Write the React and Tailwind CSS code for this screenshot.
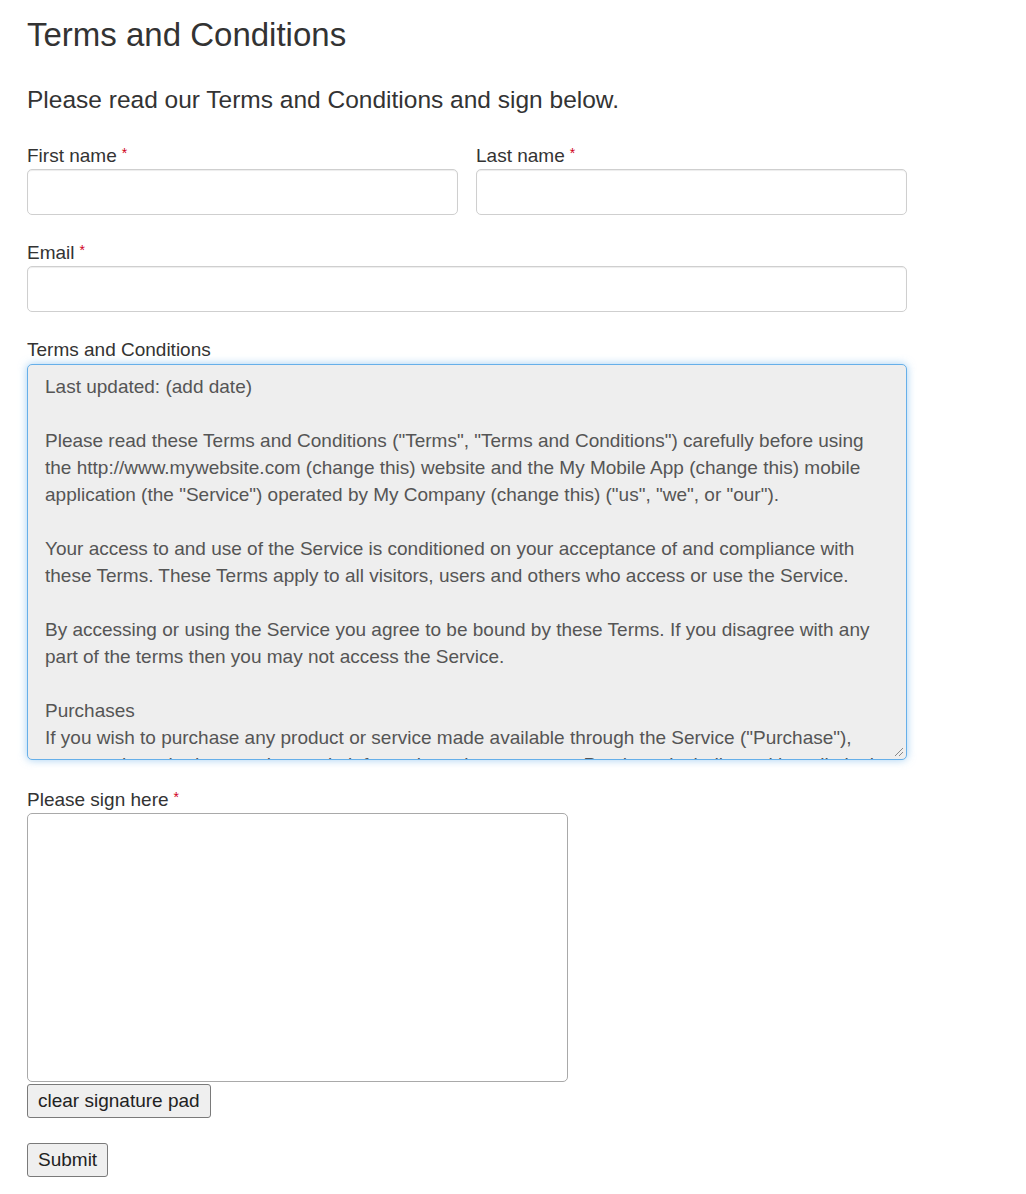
const inputCls =
  "h-[46px] rounded-[5px] border border-[#cfcfcf] shadow-[inset_0_1px_1px_rgba(0,0,0,0.075)] bg-white";
const btnCls =
  "h-[34px] px-[10px] rounded-[3px] border border-[#7a7a7a] bg-[#efefef] text-[19px] leading-[24px] text-[#222]";

function Star() {
  return <span className="text-[#d0021b] text-[14px] leading-none align-[4px] ml-[5px]">*</span>;
}

function Field({ label, required, children, className = "" }) {
  return (
    <div className={"flex flex-col gap-[1px] " + className}>
      <div className="pt-[1px] h-[25px] text-[19px] leading-[24px]">
        {label}
        {required && <Star />}
      </div>
      {children}
    </div>
  );
}

export default function App() {
  const font = { fontFamily: '"Liberation Sans", Arial, sans-serif' };
  const lines = [
    "Last updated: (add date)",
    "",
    'Please read these Terms and Conditions ("Terms", "Terms and Conditions") carefully before using',
    "the http://www.mywebsite.com (change this) website and the My Mobile App (change this) mobile",
    'application (the "Service") operated by My Company (change this) ("us", "we", or "our").',
    "",
    "Your access to and use of the Service is conditioned on your acceptance of and compliance with",
    "these Terms. These Terms apply to all visitors, users and others who access or use the Service.",
    "",
    "By accessing or using the Service you agree to be bound by these Terms. If you disagree with any",
    "part of the terms then you may not access the Service.",
    "",
    "Purchases",
    'If you wish to purchase any product or service made available through the Service ("Purchase"),',
    "you may be asked to supply certain information relevant to your Purchase including, without limitation,",
  ];
  return (
    <div className="min-h-[1194px] bg-white pl-[27px] pt-[17px] text-[#333] flex flex-col items-start" style={font}>
      <h1 className="text-[33px] leading-[36px] font-normal">Terms and Conditions</h1>
      <p className="mt-[32px] text-[24.5px] leading-[30px]">Please read our Terms and Conditions and sign below.</p>

      <div className="mt-[28px] w-[880px] flex flex-col gap-[25px]">
        <div className="grid grid-cols-2 gap-[18px]">
          <Field label="First name" required>
            <div className={inputCls} />
          </Field>
          <Field label="Last name" required>
            <div className={inputCls} />
          </Field>
        </div>

        <Field label="Email" required>
          <div className={inputCls} />
        </Field>

        <Field label="Terms and Conditions" className="gap-[2px]">
          <div className="relative h-[396px] rounded-[5px] border border-[#66afe9] bg-[#eeeeee] shadow-[0_0_8px_rgba(102,175,233,0.6)] overflow-hidden">
            <div className="pl-[17px] pt-[8px] text-[19px] leading-[27px] text-[#555] whitespace-nowrap flex flex-col">
              {lines.map((l, i) => (
                <div key={i} className="h-[27px]">{l}</div>
              ))}
            </div>
            <svg className="absolute right-[2px] bottom-[2px]" width="11" height="11" viewBox="0 0 11 11">
              <line x1="10" y1="2" x2="2" y2="10" stroke="#888" strokeWidth="1" />
              <line x1="10" y1="6" x2="6" y2="10" stroke="#888" strokeWidth="1" />
            </svg>
          </div>
        </Field>
      </div>

      <div className="mt-[28px] flex flex-col items-start">
        <div className="h-[24px] text-[19px] leading-[24px]">
          Please sign here
          <Star />
        </div>
        <div className="mt-[1px] w-[541px] h-[269px] rounded-[5px] border border-[#a9a9a9] bg-white" />
        <button className={"mt-[2px] " + btnCls}>clear signature pad</button>
        <button className={"mt-[25px] " + btnCls}>Submit</button>
      </div>
    </div>
  );
}
